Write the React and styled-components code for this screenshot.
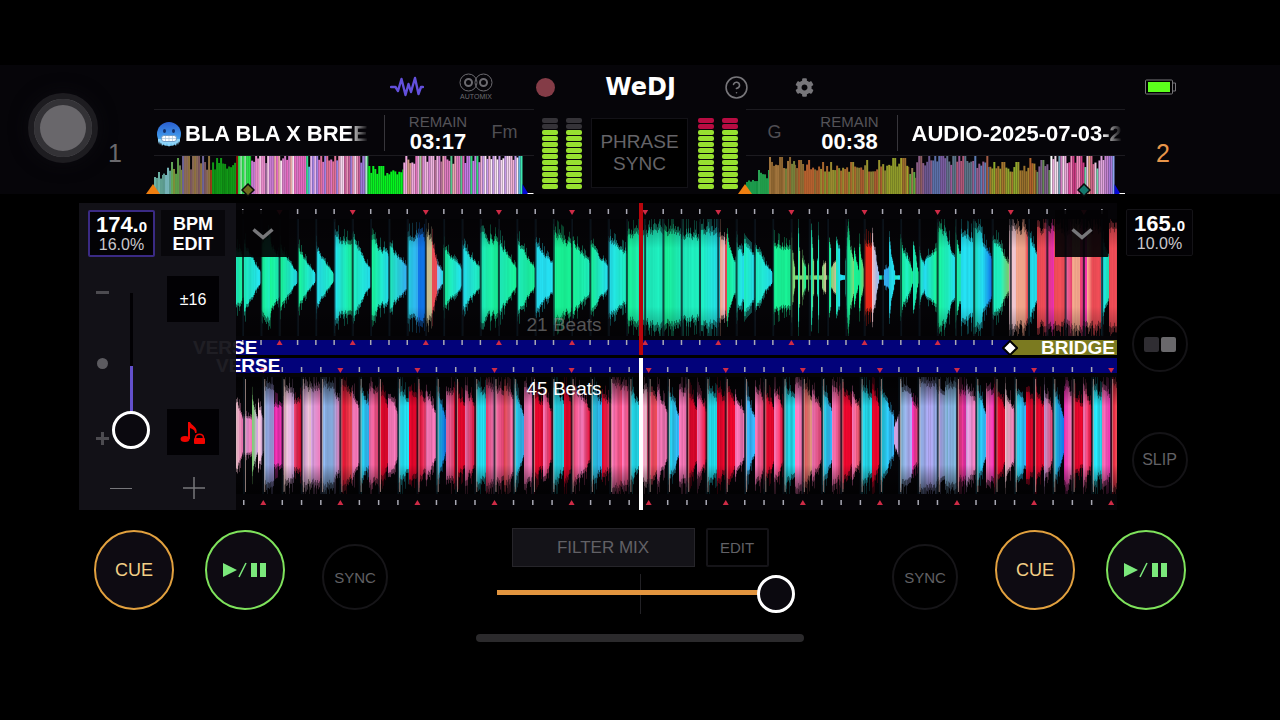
import React, { useState } from 'react';
import styled, { createGlobalStyle, css } from 'styled-components';
import { CircleHelp } from 'lucide-react';
import { FaCog } from 'react-icons/fa';

const GlobalStyle = createGlobalStyle`
  * {
    box-sizing: border-box;
  }

  body {
    margin: 0;
    background: #000;
    color: #fff;
    font-family: 'Liberation Sans', Arial, sans-serif;
  }

  button {
    padding: 0;
    border: 0;
    background: none;
    color: inherit;
    font-family: inherit;
    cursor: pointer;
  }

  svg {
    display: block;
  }
`;

const palette = {
  teal: [30, 238, 190],
  green: [24, 244, 150],
  cyan: [36, 222, 240],
  sky: [52, 176, 244],
  blue: [16, 118, 236],
  red: [230, 6, 44],
  hot: [240, 40, 24],
  coral: [238, 76, 86],
  rose: [232, 66, 112],
  pink: [246, 120, 184],
  magenta: [240, 48, 180],
  salmon: [244, 166, 140],
  blush: [238, 196, 206],
  lilac: [214, 164, 228],
  violet: [176, 164, 240],
  ice: [146, 186, 242],
  mist: [130, 188, 222],
  lime: [130, 216, 120],
  sand: [206, 196, 150],
};

// [start x, amplitude at start, amplitude at end, colour at start, colour at end]
const deckOneWave = [
  [0, 36, 22, 'teal', 'green'],
  [8, 42, 6, 'teal', 'cyan'],
  [25, 38, 46, 'green', 'teal'],
  [34, 44, 24, 'green', 'teal'],
  [44, 36, 5, 'green', 'cyan'],
  [62, 36, 4, 'green', 'cyan'],
  [80, 36, 4, 'cyan', 'teal'],
  [98, 48, 38, 'cyan', 'green'],
  [117, 44, 11, 'teal', 'cyan'],
  [135, 44, 28, 'green', 'cyan'],
  [153, 38, 14, 'teal', 'sky'],
  [171, 46, 48, 'cyan', 'sky'],
  [182, 48, 46, 'blue', 'blue'],
  [190, 50, 44, 'sand', 'sand'],
  [196, 42, 20, 'coral', 'coral'],
  [201, 16, 8, 'ice', 'cyan'],
  [207, 38, 11, 'green', 'cyan'],
  [226, 38, 13, 'cyan', 'teal'],
  [244, 52, 42, 'teal', 'green'],
  [263, 44, 12, 'teal', 'green'],
  [281, 46, 12, 'teal', 'green'],
  [299, 42, 17, 'cyan', 'cyan'],
  [317, 54, 38, 'green', 'green'],
  [336, 46, 18, 'green', 'teal'],
  [354, 40, 14, 'green', 'cyan'],
  [372, 44, 30, 'cyan', 'teal'],
  [391, 48, 52, 'green', 'teal'],
  [409, 56, 52, 'teal', 'teal'],
  [428, 57, 50, 'green', 'teal'],
  [446, 54, 48, 'teal', 'teal'],
  [464, 57, 50, 'teal', 'cyan'],
  [484, 52, 48, 'salmon', 'blush'],
  [489, 42, 44, 'coral', 'coral'],
  [491, 50, 18, 'green', 'teal'],
  [500, 40, 26, 'teal', 'cyan'],
  [508, 38, 28, 'teal', 'cyan'],
  [519, 36, 5, 'teal', 'cyan'],
  [537, 42, 32, 'green', 'green'],
  [555, 46, 12, 'lime', 'lime'],
  [559, 2, 2, 'lime', 'lime'],
  [562, 52, 30, 'teal', 'lime'],
  [564, 2, 2, 'lime', 'lime'],
  [566, 24, 12, 'lime', 'green'],
  [570, 2, 2, 'lime', 'lime'],
  [572, 16, 16, 'lime', 'lime'],
  [573, 2, 2, 'lime', 'lime'],
  [575, 52, 22, 'teal', 'lime'],
  [578, 2, 2, 'lime', 'lime'],
  [581, 20, 48, 'teal', 'teal'],
  [583, 2, 2, 'lime', 'lime'],
  [586, 14, 16, 'lime', 'sand'],
  [590, 2, 2, 'lime', 'lime'],
  [593, 42, 36, 'green', 'teal'],
  [595, 12, 20, 'lime', 'sand'],
  [600, 48, 34, 'teal', 'cyan'],
  [604, 3, 2, 'cyan', 'cyan'],
  [609, 20, 54, 'teal', 'green'],
  [613, 40, 18, 'green', 'lime'],
  [618, 34, 8, 'green', 'green'],
  [623, 38, 10, 'green', 'lime'],
  [628, 44, 38, 'hot', 'hot'],
  [636, 54, 6, 'blush', 'ice'],
  [643, 2, 2, 'teal', 'teal'],
  [648, 10, 12, 'sky', 'sky'],
  [653, 40, 8, 'cyan', 'cyan'],
  [659, 2, 2, 'teal', 'cyan'],
  [664, 48, 22, 'green', 'teal'],
  [671, 26, 8, 'teal', 'green'],
  [677, 42, 6, 'teal', 'green'],
  [683, 32, 14, 'teal', 'cyan'],
  [689, 22, 30, 'cyan', 'green'],
  [701, 56, 54, 'green', 'teal'],
  [711, 50, 24, 'teal', 'cyan'],
  [719, 50, 28, 'green', 'teal'],
  [725, 54, 46, 'cyan', 'cyan'],
  [737, 57, 50, 'teal', 'cyan'],
  [746, 44, 22, 'cyan', 'blue'],
  [756, 46, 38, 'teal', 'teal'],
  [764, 36, 16, 'teal', 'lime'],
  [773, 58, 58, 'blush', 'blush'],
  [780, 58, 57, 'salmon', 'salmon'],
  [788, 57, 50, 'salmon', 'coral'],
  [792, 48, 30, 'cyan', 'cyan'],
  [801, 58, 58, 'coral', 'coral'],
  [809, 58, 57, 'rose', 'magenta'],
  [818, 58, 57, 'coral', 'coral'],
  [829, 58, 56, 'pink', 'rose'],
  [836, 58, 57, 'salmon', 'salmon'],
  [844, 58, 54, 'rose', 'magenta'],
  [851, 58, 56, 'salmon', 'coral'],
  [857, 58, 50, 'coral', 'coral'],
  [865, 50, 24, 'cyan', 'teal'],
  [873, 58, 58, 'coral', 'coral'],
];

const deckTwoWave = [
  [0, 44, 22, 'blush', 'pink'],
  [7, 24, 18, 'lilac', 'pink'],
  [16, 42, 20, 'lime', 'lilac'],
  [22, 40, 18, 'blush', 'lilac'],
  [28, 58, 56, 'ice', 'violet'],
  [38, 38, 34, 'magenta', 'magenta'],
  [48, 58, 48, 'blush', 'lilac'],
  [58, 36, 42, 'rose', 'red'],
  [66, 58, 56, 'lilac', 'blush'],
  [75, 57, 52, 'lilac', 'pink'],
  [86, 58, 56, 'ice', 'ice'],
  [96, 57, 42, 'ice', 'pink'],
  [105, 58, 50, 'red', 'coral'],
  [116, 50, 36, 'pink', 'pink'],
  [124, 58, 36, 'cyan', 'sky'],
  [133, 58, 50, 'pink', 'rose'],
  [143, 56, 34, 'red', 'red'],
  [152, 48, 28, 'pink', 'pink'],
  [162, 58, 42, 'cyan', 'cyan'],
  [173, 57, 40, 'red', 'red'],
  [182, 57, 38, 'red', 'rose'],
  [190, 50, 28, 'pink', 'pink'],
  [200, 56, 22, 'cyan', 'blue'],
  [210, 57, 50, 'pink', 'rose'],
  [218, 54, 38, 'red', 'red'],
  [229, 57, 34, 'pink', 'red'],
  [240, 58, 48, 'cyan', 'cyan'],
  [250, 58, 54, 'rose', 'pink'],
  [258, 58, 50, 'pink', 'rose'],
  [268, 56, 46, 'coral', 'pink'],
  [278, 58, 26, 'cyan', 'sky'],
  [288, 58, 50, 'pink', 'pink'],
  [297, 54, 36, 'red', 'red'],
  [307, 52, 28, 'pink', 'red'],
  [317, 58, 42, 'cyan', 'cyan'],
  [328, 57, 40, 'red', 'red'],
  [336, 57, 46, 'rose', 'pink'],
  [346, 50, 28, 'pink', 'red'],
  [355, 58, 38, 'cyan', 'sky'],
  [366, 48, 36, 'red', 'rose'],
  [376, 58, 56, 'pink', 'rose'],
  [386, 58, 56, 'pink', 'rose'],
  [394, 58, 36, 'cyan', 'cyan'],
  [403, 58, 54, 'pink', 'blush'],
  [411, 57, 44, 'rose', 'coral'],
  [421, 56, 30, 'pink', 'pink'],
  [432, 58, 24, 'cyan', 'sky'],
  [443, 57, 50, 'pink', 'pink'],
  [451, 54, 34, 'red', 'red'],
  [461, 50, 28, 'pink', 'red'],
  [471, 58, 44, 'cyan', 'cyan'],
  [481, 57, 36, 'red', 'red'],
  [490, 57, 36, 'red', 'red'],
  [499, 50, 24, 'pink', 'pink'],
  [509, 58, 20, 'sky', 'sky'],
  [519, 57, 46, 'pink', 'rose'],
  [528, 56, 36, 'red', 'red'],
  [538, 56, 34, 'pink', 'red'],
  [548, 58, 46, 'cyan', 'cyan'],
  [559, 58, 54, 'pink', 'pink'],
  [567, 57, 46, 'coral', 'salmon'],
  [576, 54, 26, 'pink', 'rose'],
  [586, 58, 30, 'cyan', 'sky'],
  [596, 58, 50, 'pink', 'rose'],
  [606, 56, 36, 'red', 'red'],
  [616, 52, 30, 'pink', 'coral'],
  [625, 58, 46, 'cyan', 'cyan'],
  [636, 57, 36, 'red', 'red'],
  [644, 58, 22, 'cyan', 'sky'],
  [658, 10, 24, 'lilac', 'lilac'],
  [664, 58, 46, 'mist', 'violet'],
  [676, 38, 32, 'magenta', 'rose'],
  [683, 58, 57, 'ice', 'violet'],
  [694, 58, 57, 'violet', 'ice'],
  [703, 58, 57, 'violet', 'mist'],
  [712, 58, 57, 'ice', 'mist'],
  [721, 58, 50, 'rose', 'magenta'],
  [730, 56, 38, 'lilac', 'pink'],
  [740, 58, 30, 'cyan', 'sky'],
  [750, 57, 48, 'pink', 'magenta'],
  [758, 56, 34, 'red', 'red'],
  [769, 54, 30, 'blush', 'pink'],
  [779, 58, 38, 'cyan', 'sky'],
  [790, 57, 36, 'red', 'red'],
  [799, 56, 36, 'red', 'red'],
  [808, 52, 28, 'lilac', 'rose'],
  [817, 58, 24, 'cyan', 'blue'],
  [828, 57, 48, 'magenta', 'pink'],
  [836, 52, 34, 'red', 'red'],
  [847, 57, 32, 'pink', 'red'],
  [856, 58, 46, 'cyan', 'cyan'],
  [866, 57, 48, 'pink', 'magenta'],
  [875, 57, 56, 'red', 'coral'],
];

// [start x, lowest bar, highest bar, colours picked for the bars]
const overviewOne = [
  [0, 14, 22, ['#5f9f90', '#6ab0a4']],
  [9, 18, 32, ['#5c9a90', '#63a858', '#76b4b8']],
  [19, 20, 36, ['#7d8f3a', '#6e7a52', '#5b9c48']],
  [28, 24, 38, ['#8a6a58', '#8f7240', '#6e6496', '#7c5860']],
  [56, 22, 28, ['#9a3c18']],
  [58, 22, 36, ['#119a17', '#0f8d14']],
  [82, 38, 38, ['#8c1408']],
  [84, 16, 38, ['#2de04c', '#17c62a', '#8ce0a0']],
  [97, 30, 38, ['#e58ac8', '#c77ad0', '#f0c4e0', '#9c6c9a']],
  [120, 32, 38, ['#e66ac0', '#e9a8a8', '#fae4ee', '#d47ac4']],
  [152, 24, 38, ['#38d890', '#5fb6e0']],
  [156, 30, 38, ['#dc74c4', '#a080e0', '#e07098', '#e4b4ec']],
  [184, 28, 38, ['#c85c98', '#e894b8', '#9e7ad8', '#f4d4ec']],
  [211, 24, 38, ['#b0e0d0', '#40e070']],
  [214, 18, 28, ['#04f41e', '#12e828']],
  [249, 30, 38, ['#e070b8', '#d49a88', '#f0a8dc', '#a0c4a0']],
  [268, 30, 38, ['#d884d4', '#f0b4e0', '#b46c94']],
  [288, 28, 38, ['#54c88c', '#e07cc0', '#e8a4b4']],
  [308, 30, 38, ['#34d880', '#e068b8', '#c47ce4']],
  [326, 34, 38, ['#f4d4f0', '#c498e8', '#f0b0d4', '#fdeaf6']],
  [364, 24, 38, ['#3ce8b0', '#5cb4e0']],
];

const overviewTwo = [
  [0, 12, 15, ['#1c9a4c', '#169444']],
  [12, 15, 24, ['#209c4a', '#2aa454']],
  [23, 24, 37, ['#8c6430', '#a0743c', '#76803a']],
  [50, 22, 34, ['#a85e2c', '#8c6c34', '#b4602e']],
  [74, 22, 32, ['#9a8a30', '#a8682e', '#84902e']],
  [110, 22, 34, ['#a85c30', '#8a7c34', '#98942e']],
  [140, 22, 36, ['#8e9a2a', '#a4a02c', '#9a6c2e']],
  [163, 14, 26, ['#5ca83c', '#9c7c50']],
  [170, 28, 38, ['#8a5c84', '#6c5890', '#8c5c60']],
  [186, 32, 38, ['#5c70a8', '#7a5ca0', '#64708c']],
  [204, 28, 38, ['#9a5c98', '#5c7488', '#b05878']],
  [226, 26, 38, ['#946090', '#5c7cb4', '#a45c44']],
  [243, 22, 32, ['#8ea82c', '#a4762e', '#98982e']],
  [275, 22, 36, ['#b0622c', '#a4822e', '#98702c']],
  [290, 20, 34, ['#688c58', '#845c94', '#80608c']],
  [304, 38, 38, ['#ffffff']],
  [306, 30, 38, ['#d47cc0', '#e8a8d8', '#70a4b8', '#f4dcec']],
  [322, 28, 38, ['#e0489c', '#f08cbc', '#cc3c84']],
  [338, 24, 38, ['#ecc4e0', '#d0688c', '#dca078', '#70d0a8']],
  [352, 32, 38, ['#c484d0', '#a878d8', '#e0a4dc']],
  [366, 22, 38, ['#6888e0', '#8ca4f0']],
];

// small repeatable generator so the waves look the same on every render
const makeRandom = (seed) => () => {
  seed = (seed * 16807) % 2147483647;
  return seed / 2147483647;
};

const mix = (a, b, t) => a + (b - a) * t;

const buildWave = (segments, width, seed, stripe) => {
  const random = makeRandom(seed);
  const columns = [];
  let drift = 0.5;
  let tint = 0.5;
  segments.forEach(([start, from, to, c0, c1], index) => {
    const end = index + 1 < segments.length ? segments[index + 1][0] : width;
    for (let x = start; x < end; x++) {
      const t = (x - start) / Math.max(1, end - start - 1);
      const amp = mix(from, to, Math.pow(t, 0.8));
      drift = drift * 0.45 + random() * 0.55;
      tint = tint * 0.5 + random() * 0.5;
      const shade = 1 - stripe + tint * stripe * 1.6;
      const rgb = palette[c0].map((value, i) =>
        Math.min(255, Math.round(mix(value, palette[c1][i], t) * shade))
      );
      columns.push({
        x,
        core: amp < 8 ? amp : amp * (0.68 + drift * 0.28),
        halo: Math.min(58, amp * (0.74 + drift * 0.36)),
        tip: random() > 0.7 ? Math.min(58, amp * 1.15) : 0,
        fill: `rgb(${rgb.join(',')})`,
      });
    }
  });
  return columns;
};

const buildOverview = (segments, width, seed) => {
  const random = makeRandom(seed);
  const bars = [];
  segments.forEach(([start, low, high, colors], index) => {
    const end = index + 1 < segments.length ? segments[index + 1][0] : width;
    for (let x = start; x < end; x += 2) {
      const tall = high === 38 ? random() > 0.35 : random() > 0.85;
      bars.push({
        x,
        width: Math.min(2, end - x),
        height: tall ? high : mix(low, high, random() * 0.7),
        fill: colors[Math.floor(random() * colors.length)],
      });
    }
  });
  return bars;
};

const waveOne = buildWave(deckOneWave, 881, 77, 0.08);
const waveTwo = buildWave(deckTwoWave, 881, 1234, 0.2);
const barsOne = buildOverview(overviewOne, 368, 42);
const barsTwo = buildOverview(overviewTwo, 368, 99);

const beatsFrom = (first, step) => {
  const beats = [];
  for (let i = 0; first + i * step < 881; i++) {
    beats.push(first + i * step);
  }
  return beats;
};

const beatsOne = beatsFrom(7, 18.28);
const beatsTwo = beatsFrom(8, 19.27);

const Waveform = ({ columns, beats, id, fade, guide, edge }) => (
  <WaveSvg viewBox='0 0 881 116' preserveAspectRatio='none' aria-hidden='true'>
    <defs>
      <linearGradient id={id} x1='0' y1='0' x2='0' y2='1'>
        <stop offset='0' stopColor='#000' stopOpacity={fade} />
        <stop offset='0.25' stopColor='#000' stopOpacity='0' />
        <stop offset='0.75' stopColor='#000' stopOpacity='0' />
        <stop offset='1' stopColor='#000' stopOpacity={fade} />
      </linearGradient>
    </defs>
    {guide &&
      beats.map((x) => (
        <rect key={x} x={x} y='0' width='1' height='116' fill={guide} />
      ))}
    {columns.map(({ x, halo, core, tip, fill }) => (
      <g key={x} fill={fill}>
        {tip > 0 && (
          <rect x={x} y={58 - tip} width='1' height={tip * 2} opacity='0.35' />
        )}
        <rect x={x} y={58 - halo} width='1' height={halo * 2} opacity='0.5' />
        <rect x={x} y={58 - core} width='1.1' height={core * 2} />
      </g>
    ))}
    <rect width='881' height='116' fill={`url(#${id})`} />
    {beats.map((x) => (
      <g key={x}>
        <rect x={x - 1} y='0' width='2' height='116' fill='#08111a' opacity='0.75' />
        {edge && <rect x={x + 1} y='2' width='1' height='112' fill={edge} opacity='0.7' />}
      </g>
    ))}
  </WaveSvg>
);

const Ticks = ({ beats, phase, down }) => (
  <TickSvg viewBox='0 0 881 6' preserveAspectRatio='none' aria-hidden='true'>
    {beats.map((x, index) =>
      index % 4 === phase ? (
        <path
          key={x}
          d={down ? `M${x - 3} 1h6l-3 5z` : `M${x - 3} 5h6l-3 -5z`}
          fill='#cf2b46'
        />
      ) : (
        <rect key={x} x={x - 1} y='0' width='1.5' height='5' fill='#a9a9b4' />
      )
    )}
  </TickSvg>
);

const Overview = ({ bars, cue, cueColor }) => (
  <OverviewBox>
    <svg
      width='100%'
      height='38'
      viewBox='0 0 379 38'
      preserveAspectRatio='none'
      aria-hidden='true'
    >
      {bars.map(({ x, width, height, fill }) => (
        <rect key={x} x={x} y={38 - height} width={width} height={height} fill={fill} />
      ))}
      <path d='M368 28l6 10h-6z' fill='#0508d8' />
      <rect x='373' y='37' width='6' height='1' fill='#fff' />
    </svg>
    <StartMarker viewBox='0 0 14 10'>
      <path d='M7 0l7 10H0z' fill='#ef7f10' />
    </StartMarker>
    <CueMarker viewBox='0 0 14 14' $at={cue}>
      <path d='M7 1l6 6-6 6-6-6z' fill={cueColor} stroke='#0a0a0a' strokeWidth='1.5' />
    </CueMarker>
  </OverviewBox>
);

const Meter = ({ peak }) => (
  <MeterPair>
    {[0, 1].map((channel) => (
      <MeterColumn key={channel}>
        {Array.from({ length: 12 }, (_, index) => (
          <Led key={index} $color={index < 2 ? peak : '#97e030'} />
        ))}
      </MeterColumn>
    ))}
  </MeterPair>
);

const ColdFace = () => (
  <svg width='26' height='26' viewBox='0 0 26 26' role='img' aria-label='cold face'>
    <defs>
      <linearGradient id='cold' x1='0' y1='0' x2='0' y2='1'>
        <stop offset='0' stopColor='#2b5fd0' />
        <stop offset='0.6' stopColor='#3f97ea' />
        <stop offset='1' stopColor='#7cd0f6' />
      </linearGradient>
    </defs>
    <circle cx='13' cy='13' r='12' fill='url(#cold)' />
    <path
      d='M2 18v5l1-3 1 4 1-3 1 4 2-3 1 3 2-3 2 4 2-4 2 3 1-3 2 3 1-4 1 3 1-4 1 2v-4z'
      fill='#8fd4f8'
    />
    <ellipse cx='8.5' cy='10' rx='1.5' ry='2' fill='#14306a' />
    <ellipse cx='17.5' cy='10' rx='1.5' ry='2' fill='#14306a' />
    <rect x='5.5' y='14.5' width='15' height='6' rx='2.5' fill='#fff' stroke='#6f9cc8' />
    <path d='M6 17.5h14M9.5 15v5M13 15v5M16.5 15v5' stroke='#a9c4da' strokeWidth='0.7' />
  </svg>
);

const WaveIcon = () => (
  <svg width='34' height='22' viewBox='0 0 34 22' aria-hidden='true'>
    <path
      d='M1 11h4.5L8 15l3.500-12 4 16L18.500 8 21 16 25 2l3.500 16L31 11h2'
      fill='none'
      stroke='#6350dc'
      strokeWidth='2.4'
      strokeLinejoin='round'
      strokeLinecap='round'
    />
  </svg>
);

const AutomixIcon = () => (
  <svg width='34' height='19' viewBox='0 0 34 19' fill='none' stroke='#6c6b70' aria-hidden='true'>
    <circle cx='9.5' cy='9.5' r='8.5' />
    <circle cx='24.5' cy='9.5' r='8.5' />
    <circle cx='9.5' cy='9.5' r='3.5' strokeWidth='2' />
    <circle cx='24.5' cy='9.5' r='3.5' strokeWidth='2' />
  </svg>
);

const BatteryIcon = () => (
  <svg width='32' height='16' viewBox='0 0 32 16' role='img' aria-label='Battery'>
    <rect x='0.5' y='1' width='27' height='14' rx='1' fill='#000' stroke='#77767a' />
    <rect x='3' y='3' width='22' height='10' fill='#5cff1c' />
    <path d='M28 4h2.5v8H28' fill='none' stroke='#77767a' />
  </svg>
);

const KeyLockIcon = () => (
  <svg width='26' height='26' viewBox='0 0 26 26' fill='#f00400' aria-hidden='true'>
    <ellipse cx='5' cy='19' rx='4.5' ry='3' />
    <path d='M8 2h2c1 3 8 5 6.500 11h-1.500c0-3-2.500-4-5-5v11H8z' />
    <rect x='14' y='18' width='11' height='6' rx='1' />
    <path d='M15.5 18c0-5 8-5 8 0' fill='none' stroke='#f00400' strokeWidth='1.5' />
  </svg>
);

const Chevron = () => (
  <svg width='22' height='12' viewBox='0 0 22 12' aria-hidden='true'>
    <path d='M1.5 1.5l9.5 8 9.5-8' fill='none' stroke='#77777a' strokeWidth='3.5' />
  </svg>
);

const PlusIcon = ({ size, weight, color }) => (
  <svg width={size} height={size} viewBox={`0 0 ${size} ${size}`} aria-hidden='true'>
    <path
      d={`M0 ${size / 2}h${size}M${size / 2} 0v${size}`}
      stroke={color}
      strokeWidth={weight}
    />
  </svg>
);

const PlayPause = () => (
  <svg width='44' height='16' viewBox='0 0 44 16' fill='#7be87b' aria-hidden='true'>
    <path d='M0 1l14 7-14 7zM28 1h6v14h-6zM37 1h6v14h-6z' />
    <path d='M16 15l7-14' stroke='#7be87b' strokeWidth='1.5' />
  </svg>
);

const App = () => {
  const [tempo, setTempo] = useState(94);
  const [fader, setFader] = useState(100);

  return (
    <Page>
      <GlobalStyle />
      <Header>
        <LeftEdge>
          <TouchButton aria-label='Assistive touch' />
          <DeckNumber>1</DeckNumber>
        </LeftEdge>
        <HeaderCenter>
          <Toolbar>
            <button aria-label='Waveform'>
              <WaveIcon />
            </button>
            <AutomixButton>
              <AutomixIcon />
              AUTOMIX
            </AutomixButton>
            <RecordButton aria-label='Record' />
            <Logo>WeDJ</Logo>
            <button aria-label='Help'>
              <CircleHelp size={25} strokeWidth={1.5} />
            </button>
            <button aria-label='Settings'>
              <FaCog size={19} />
            </button>
          </Toolbar>
          <Decks>
            <Deck>
              <DeckInfo>
                <Title>
                  <ColdFace />
                  <span>BLA BLA X BREE</span>
                </Title>
                <Divider />
                <Remain>
                  <small>REMAIN</small>
                  <strong>03:17</strong>
                </Remain>
                <Key>Fm</Key>
              </DeckInfo>
              <Overview bars={barsOne} cue={94} cueColor='#6f6c1e' />
            </Deck>
            <Mixer>
              <Meter peak='#353338' />
              <PhraseButton>PHRASE SYNC</PhraseButton>
              <Meter peak='#b80c42' />
            </Mixer>
            <Deck>
              <DeckInfo>
                <Key $first>G</Key>
                <Remain $narrow>
                  <small>REMAIN</small>
                  <strong>00:38</strong>
                </Remain>
                <Divider />
                <Title $indent>
                  <span>AUDIO-2025-07-03-2</span>
                </Title>
              </DeckInfo>
              <Overview bars={barsTwo} cue={338} cueColor='#14786c' />
            </Deck>
          </Decks>
        </HeaderCenter>
        <RightEdge>
          <BatteryIcon />
          <DeckNumber $active>2</DeckNumber>
        </RightEdge>
      </Header>

      <Main>
        <TempoPanel>
          <PanelColumn>
            <TempoBox $active>
              <strong>
                174.<small>0</small>
              </strong>
              <span>16.0%</span>
            </TempoBox>
            <SliderRow>
              <Marks>
                <MinusMark />
                <DotMark />
                <PlusIcon size={13} weight={3} color='#4c4b50' />
              </Marks>
              <TempoSlider
                type='range'
                aria-label='Tempo'
                value={tempo}
                onChange={(e) => setTempo(Number(e.target.value))}
              />
            </SliderRow>
            <NudgeButton aria-label='Tempo down'>
              <MinusLine />
            </NudgeButton>
          </PanelColumn>
          <PanelColumn>
            <BpmButton>BPM EDIT</BpmButton>
            <RangeButtons>
              <SquareButton>±16</SquareButton>
              <SquareButton aria-label='Key lock'>
                <KeyLockIcon />
              </SquareButton>
            </RangeButtons>
            <NudgeButton aria-label='Tempo up'>
              <PlusIcon size={22} weight={1.5} color='#77777b' />
            </NudgeButton>
          </PanelColumn>
        </TempoPanel>

        <Waves>
          <WaveDeck>
            <TickRow>
              <Ticks beats={beatsOne} phase={2} down />
            </TickRow>
            <Waveform
              columns={waveOne}
              beats={beatsOne}
              id='fade-one'
              fade={0.35}
              guide='#26262a'
            />
            <PhraseBar $top>
              <Ticks beats={beatsOne} phase={2} />
              <PhraseName $start={-43}>VERSE</PhraseName>
              <Bridge>
                <svg width='16' height='16' viewBox='0 0 16 16' aria-hidden='true'>
                  <path d='M8 1l7 7-7 7-7-7z' fill='#fff' stroke='#000' strokeWidth='2' />
                </svg>
                BRIDGE
              </Bridge>
            </PhraseBar>
            <Beats $dim>21 Beats</Beats>
            <Playhead $color='#b8050c' />
          </WaveDeck>
          <WaveDeck>
            <PhraseBar>
              <Ticks beats={beatsTwo} phase={1} down />
              <PhraseName $start={-20}>VERSE</PhraseName>
            </PhraseBar>
            <Waveform
              columns={waveTwo}
              beats={beatsTwo}
              id='fade-two'
              fade={0.6}
              edge='#c4a8a0'
            />
            <TickRow>
              <Ticks beats={beatsTwo} phase={1} />
            </TickRow>
            <Beats>45 Beats</Beats>
            <Playhead $color='#fff' />
          </WaveDeck>
          <DropButtons>
            <button aria-label='Open deck 1 panel'>
              <Chevron />
            </button>
            <button aria-label='Open deck 2 panel'>
              <Chevron />
            </button>
          </DropButtons>
        </Waves>

        <SideControls>
          <TempoBox>
            <strong>
              165.<small>0</small>
            </strong>
            <span>10.0%</span>
          </TempoBox>
          <SmallRound aria-label='Pads'>
            <Pad $color='#2f2d32' />
            <Pad $color='#69686b' />
          </SmallRound>
          <SmallRound>SLIP</SmallRound>
        </SideControls>
      </Main>

      <Transport>
        <TransportGroup>
          <RoundButton $color='#e2a13f'>CUE</RoundButton>
          <RoundButton $color='#7fe35c' aria-label='Play / Pause'>
            <PlayPause />
          </RoundButton>
          <SyncButton>SYNC</SyncButton>
        </TransportGroup>
        <Center>
          <MixButtons>
            <FilterButton>FILTER MIX</FilterButton>
            <EditButton>EDIT</EditButton>
          </MixButtons>
          <Crossfader
            type='range'
            aria-label='Crossfader'
            value={fader}
            onChange={(e) => setFader(Number(e.target.value))}
          />
        </Center>
        <TransportGroup>
          <SyncButton>SYNC</SyncButton>
          <RoundButton $color='#e2a13f'>CUE</RoundButton>
          <RoundButton $color='#7fe35c' aria-label='Play / Pause'>
            <PlayPause />
          </RoundButton>
        </TransportGroup>
      </Transport>
      <HomeBar />
    </Page>
  );
};

export default App;

const Page = styled.div`
  min-height: 100vh;
  padding-top: 65px;
  background: #000;
`;

const Header = styled.header`
  display: grid;
  grid-template-columns: 154px 1fr 155px;
  background: #060509;
`;

const LeftEdge = styled.div`
  display: flex;
  padding: 28px 0 0 28px;
`;

const TouchButton = styled.button`
  width: 70px;
  height: 70px;
  border-radius: 50%;
  background: #69676b;
  border: 6px solid #1d1c20;
  box-shadow: inset 0 0 0 6px #333236, 0 0 18px #0c0b10;
`;

const DeckNumber = styled.span`
  margin: 46px 0 0 10px;
  font-size: 25px;
  line-height: 28px;
  color: #6a696d;

  ${({ $active }) =>
    $active &&
    css`
      margin: 44px 0 0 11px;
      color: #e8964a;
    `}
`;

const RightEdge = styled.div`
  display: flex;
  flex-direction: column;
  padding: 14px 0 0 20px;
`;

const HeaderCenter = styled.div`
  min-width: 0;
`;

const Toolbar = styled.nav`
  display: grid;
  grid-template-columns: 69px 69px 69px 122px 69px 67px;
  justify-content: center;
  align-items: center;
  height: 44px;
  padding-right: 69px;
  color: #77767a;

  button {
    display: grid;
    justify-items: center;
  }
`;

const AutomixButton = styled.button`
  gap: 1px;
  font-size: 7px;
  line-height: 8px;
  color: #6c6b70;
`;

const RecordButton = styled.button`
  width: 19px;
  height: 19px;
  justify-self: center;
  border-radius: 50%;
  background: #843c47;
`;

const Logo = styled.span`
  font: bold 24px/28px 'DejaVu Sans', sans-serif;
  color: #fff;
  text-align: center;
`;

const Decks = styled.div`
  display: grid;
  grid-template-columns: 1fr 212px 1fr;
`;

const Deck = styled.section`
  min-width: 0;
  border-top: 1px solid #1c1b20;
`;

const DeckInfo = styled.div`
  display: flex;
  align-items: center;
  height: 46px;
  border-bottom: 1px solid #1c1b20;
`;

const Title = styled.h2`
  display: flex;
  flex: 1;
  align-items: center;
  gap: 3px;
  min-width: 0;
  margin: 2px 0 0 ${({ $indent }) => ($indent ? 14 : 2)}px;
  font-size: 22px;
  line-height: 26px;
  white-space: nowrap;

  svg {
    flex: none;
  }

  span {
    mask-image: linear-gradient(to right, #000 calc(100% - 20px), transparent);
  }
`;

const Divider = styled.span`
  width: 1px;
  height: 36px;
  background: #37363b;
`;

const Remain = styled.div`
  display: grid;
  width: ${({ $narrow }) => ($narrow ? 94 : 107)}px;
  justify-items: center;

  small {
    font-size: 15px;
    line-height: 18px;
    color: #545358;
  }

  strong {
    font-size: 22px;
    line-height: 22px;
  }
`;

const Key = styled.span`
  width: ${({ $first }) => ($first ? 57 : 42)}px;
  padding-left: ${({ $first }) => ($first ? 22 : 0)}px;
  font-size: 18px;
  color: #4f4e53;
`;

const OverviewBox = styled.div`
  position: relative;
`;

const StartMarker = styled.svg`
  position: absolute;
  bottom: 0;
  left: -8px;
  width: 14px;
  height: 10px;
`;

const CueMarker = styled.svg`
  position: absolute;
  bottom: -3px;
  left: ${({ $at }) => ($at / 379) * 100}%;
  width: 14px;
  height: 14px;
  margin-left: -7px;
`;

const Mixer = styled.div`
  display: flex;
  justify-content: space-between;
  align-items: flex-start;
  padding: 9px 8px 0;
`;

const MeterPair = styled.div`
  display: flex;
  gap: 8px;
`;

const MeterColumn = styled.div`
  display: grid;
  gap: 1px;
`;

const Led = styled.span`
  width: 16px;
  height: 5px;
  border-radius: 2px;
  background: ${({ $color }) => $color};
`;

const PhraseButton = styled.button`
  width: 97px;
  height: 70px;
  padding: 0 8px;
  border: 1px solid #131217;
  background: #000;
  color: #656468;
  font-size: 19px;
  line-height: 22px;
`;

const Main = styled.main`
  display: grid;
  grid-template-columns: 157px 1fr 163px;
  margin-top: 9px;
  padding-left: 79px;
`;

const TempoPanel = styled.section`
  position: relative;
  z-index: 1;
  display: flex;
  gap: 7px;
  padding: 7px 9px;
  background: rgba(19, 18, 24, 0.95);
`;

const PanelColumn = styled.div`
  display: flex;
  flex-direction: column;
  width: 66px;
`;

const TempoBox = styled.div`
  display: grid;
  align-content: center;
  justify-items: center;
  width: 67px;
  height: 47px;
  border: 1px solid #141317;
  border-radius: 2px;
  background: #030205;

  strong {
    font-size: 22px;
    line-height: 20px;
  }

  small {
    font-size: 15px;
  }

  span {
    font-size: 16px;
    line-height: 15px;
    color: #c9c8cc;
  }

  ${({ $active }) =>
    $active &&
    css`
      border: 2px solid #3a2a84;
    `}
`;

const SliderRow = styled.div`
  display: flex;
  margin-top: 17px;
  height: 184px;
`;

const Marks = styled.div`
  display: flex;
  flex-direction: column;
  align-items: center;
  justify-content: space-between;
  width: 24px;
  padding: 17px 0 13px 4px;
`;

const MinusMark = styled.span`
  width: 13px;
  height: 3px;
  background: #4c4b50;
`;

const DotMark = styled.span`
  width: 11px;
  height: 11px;
  border-radius: 50%;
  background: #5c5b60;
`;

const thumb = css`
  appearance: none;
  width: 38px;
  height: 38px;
  border: 3px solid #fff;
  border-radius: 50%;
  background: #0b090f;
`;

const TempoSlider = styled.input`
  appearance: none;
  writing-mode: vertical-lr;
  width: 38px;
  height: 184px;
  margin: 0;
  background: linear-gradient(#020104 50%, #6350cc 50%) center / 3px
    calc(100% - 38px) no-repeat;

  &::-webkit-slider-thumb {
    ${thumb}
  }
`;

const NudgeButton = styled.button`
  display: grid;
  place-items: center;
  height: 30px;
  margin-top: auto;
`;

const MinusLine = styled.span`
  width: 22px;
  height: 1px;
  background: #77777b;
`;

const BpmButton = styled.button`
  width: 64px;
  height: 46px;
  padding: 2px 10px 0;
  background: #08070b;
  font-size: 18px;
  font-weight: bold;
  line-height: 20px;
`;

const RangeButtons = styled.div`
  display: flex;
  flex-direction: column;
  align-items: center;
  justify-content: space-between;
  height: 179px;
  margin: 20px 2px 0 0;
`;

const SquareButton = styled.button`
  display: grid;
  place-items: center;
  width: 52px;
  height: 46px;
  padding-top: 2px;
  background: #020104;
  font-size: 16px;
`;

const Waves = styled.section`
  position: relative;
  display: grid;
  gap: 3px;
  min-width: 0;
`;

const WaveDeck = styled.div`
  position: relative;
  display: flex;
  flex-direction: column;
  background: #050407;
`;

const TickRow = styled.div`
  height: 16px;
  padding-top: 6px;
`;

const TickSvg = styled.svg`
  width: 100%;
  height: 6px;
`;

const WaveSvg = styled.svg`
  width: 100%;
  height: 117px;
`;

const PhraseBar = styled.div`
  position: relative;
  display: flex;
  align-items: ${({ $top }) => ($top ? 'flex-start' : 'flex-end')};
  height: 15px;
  margin: ${({ $top }) => ($top ? '4px 0 0' : '0 0 4px')};
  background: #02027a;
`;

const PhraseName = styled.span`
  position: absolute;
  top: 0;
  left: ${({ $start }) => $start}px;
  font-size: 19px;
  font-weight: bold;
  line-height: 15px;
`;

const Bridge = styled.span`
  position: absolute;
  top: 0;
  right: 0;
  display: flex;
  justify-content: space-between;
  align-items: center;
  width: 12%;
  height: 15px;
  padding-right: 2px;
  background: #7b7a20;
  font-size: 19px;
  font-weight: bold;
  line-height: 15px;

  svg {
    margin-left: -9px;
  }
`;

const Beats = styled.span`
  position: absolute;
  top: ${({ $dim }) => ($dim ? 111 : 20)}px;
  right: calc(50% + 75px);
  font-size: 19px;
  line-height: 22px;
  color: ${({ $dim }) => ($dim ? 'rgba(140, 140, 140, 0.6)' : '#fff')};
`;

const Playhead = styled.span`
  position: absolute;
  top: 0;
  bottom: 0;
  left: calc(50% - 38px);
  width: 4px;
  background: ${({ $color }) => $color};
`;

const DropButtons = styled.div`
  position: absolute;
  top: 7px;
  left: 0;
  right: 9px;
  display: flex;
  justify-content: space-between;

  button {
    display: grid;
    place-items: center;
    width: 53px;
    height: 47px;
    background: rgba(3, 2, 4, 0.92);
  }
`;

const SideControls = styled.aside`
  display: flex;
  flex-direction: column;
  align-items: center;
  width: 67px;
  margin-left: 9px;
  padding-top: 6px;
`;

const SmallRound = styled.button`
  display: flex;
  align-items: center;
  justify-content: center;
  gap: 2px;
  width: 56px;
  height: 56px;
  margin-top: 60px;
  border: 2px solid #141316;
  border-radius: 50%;
  font-size: 16px;
  color: #626165;
`;

const Pad = styled.span`
  width: 15px;
  height: 15px;
  border-radius: 2px;
  background: ${({ $color }) => $color};
`;

const Transport = styled.footer`
  display: flex;
  justify-content: space-between;
  margin-top: 18px;
  padding: 0 94px;
`;

const TransportGroup = styled.div`
  display: flex;
  align-items: flex-end;
  gap: 31px;
  height: 82px;
`;

const RoundButton = styled.button`
  display: grid;
  place-items: center;
  width: 80px;
  height: 80px;
  border: 2px solid ${({ $color }) => $color};
  border-radius: 50%;
  background: #0e0b12;
  font-size: 18px;
  color: #f2cf86;
`;

const SyncButton = styled.button`
  width: 66px;
  height: 66px;
  border: 2px solid #161518;
  border-radius: 50%;
  font-size: 15px;
  color: #616064;

  &:last-child {
    margin-left: 6px;
  }

  &:first-child {
    margin-right: 6px;
  }
`;

const Center = styled.div`
  display: grid;
  justify-items: center;
  gap: 7px;
`;

const MixButtons = styled.div`
  display: flex;
  gap: 11px;
`;

const FilterButton = styled.button`
  width: 183px;
  height: 39px;
  border: 1px solid #26252a;
  background: #141318;
  font-size: 17px;
  color: #626166;
`;

const EditButton = styled.button`
  width: 63px;
  height: 39px;
  border: 2px solid #151418;
  border-radius: 2px;
  font-size: 15px;
  color: #626166;
`;

const Crossfader = styled.input`
  appearance: none;
  width: 310px;
  height: 40px;
  margin: 0;
  background: linear-gradient(#e2953f, #e2953f) center 16px / calc(100% - 24px)
      5px no-repeat,
    linear-gradient(#222125, #222125) center / 1px 100% no-repeat;

  &::-webkit-slider-thumb {
    ${thumb}
  }
`;

const HomeBar = styled.div`
  width: 328px;
  height: 8px;
  margin: 20px auto 0;
  border-radius: 4px;
  background: #2b2a2c;
`;
